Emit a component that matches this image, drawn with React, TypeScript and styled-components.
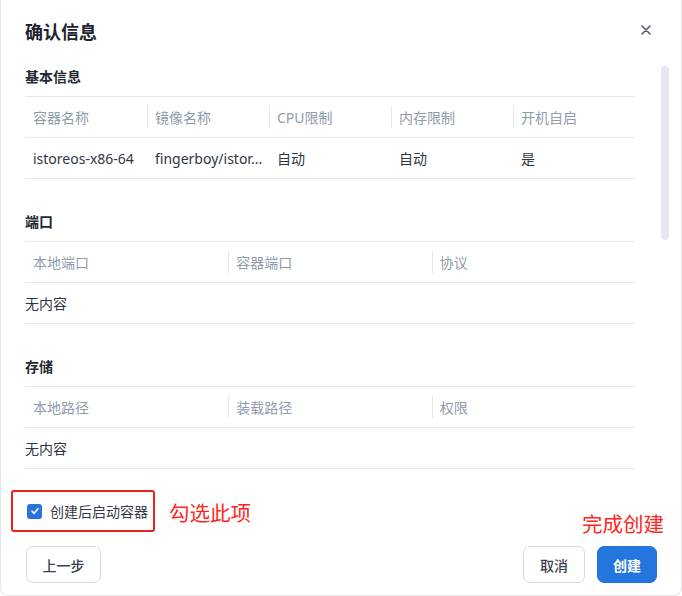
import React from "react";
import styled, { createGlobalStyle } from "styled-components";

const Global = createGlobalStyle`
  html, body { margin: 0; padding: 0; background: #ffffff; }
  body { font-family: "Noto Sans", "Noto Sans CJK SC", sans-serif; }
  * { box-sizing: border-box; }
`;

const Dialog = styled.div`
  position: relative;
  width: 682px;
  height: 596px;
  background: #fff;
  border-left: 1px solid #e1e4e8;
  border-right: 1px solid #e1e4e8;
  border-bottom: 1px solid #e1e4e8;
  border-radius: 0 0 8px 8px;
  display: flex;
  flex-direction: column;
  overflow: hidden;
`;

const Header = styled.div`
  height: 60px;
  flex: none;
  display: flex;
  align-items: center;
  justify-content: space-between;
  padding: 0 28px 0 24px;
`;

const Title = styled.div`
  font-family: "Noto Sans CJK SC", sans-serif;
  font-size: 18px;
  font-weight: 700;
  color: #1d2330;
  line-height: 24px;
  margin-top: 1px;
`;

const Close = styled.button`
  width: 14px;
  height: 14px;
  padding: 0;
  border: none;
  background: none;
  display: flex;
  align-items: center;
  justify-content: center;
  cursor: pointer;
`;

const Body = styled.div`
  height: 420px;
  flex: none;
  display: flex;
  overflow: hidden;
  padding-left: 24px;
`;

const Content = styled.div`
  width: 610px;
  flex: none;
  padding-top: 6px;
`;

const Scrollbar = styled.div`
  margin-left: 26px;
  margin-top: 6px;
  width: 8px;
  height: 174px;
  border-radius: 4px;
  background: #e5e8ec;
`;

const Section = styled.section`
  & + & { margin-top: 32px; }
`;

const SectionTitle = styled.div`
  font-family: "Noto Sans CJK SC", sans-serif;
  font-size: 14px;
  font-weight: 700;
  color: #222831;
  line-height: 20px;
  margin-bottom: 10px;
`;

const Table = styled.div<{ $cols: number }>`
  display: grid;
  grid-template-columns: repeat(${(p) => p.$cols}, 1fr);
  border-top: 1px solid #e3e7ed;
`;

const HeadCell = styled.div<{ $first?: boolean }>`
  height: 41px;
  display: flex;
  align-items: center;
  position: relative;
  padding-left: 8px;
  font-size: 14px;
  color: #909bab;
  border-bottom: 1px solid #e3e7ed;
  font-family: "Noto Sans", "Noto Sans CJK SC", sans-serif;
  &::before {
    content: "";
    display: ${(p) => (p.$first ? "none" : "block")};
    position: absolute;
    left: 0;
    top: 9px;
    height: 22px;
    width: 1px;
    background: #e3e7ed;
  }
`;

const Cell = styled.div`
  height: 41px;
  display: flex;
  align-items: center;
  padding-left: 8px;
  padding-right: 6px;
  font-size: 14px;
  color: #2f3642;
  border-bottom: 1px solid #e3e7ed;
  white-space: nowrap;
  overflow: hidden;
  & > span { overflow: hidden; text-overflow: ellipsis; }
`;

const Empty = styled.div<{ $cols: number }>`
  grid-column: 1 / span ${(p) => p.$cols};
  height: 41px;
  display: flex;
  align-items: center;
  font-size: 14px;
  color: #2f3642;
  border-bottom: 1px solid #e3e7ed;
`;

const CheckRow = styled.div`
  display: flex;
  align-items: center;
  gap: 14px;
  padding-left: 10px;
  margin-top: 10px;
  flex: none;
`;

const CheckLabel = styled.label`
  width: 144px;
  height: 42px;
  border: 2px solid #f0201c;
  border-radius: 3px;
  display: flex;
  align-items: center;
  gap: 8px;
  padding-left: 14px;
  font-size: 14px;
  color: #333a45;
  cursor: pointer;
`;

const Box = styled.span`
  width: 15px;
  height: 15px;
  border-radius: 3px;
  background: #2a73dd;
  display: flex;
  align-items: center;
  justify-content: center;
`;

const Note = styled.span`
  font-family: "Noto Sans CJK SC", sans-serif;
  font-size: 20.5px;
  color: #ff2621;
  line-height: 26px;
  margin-top: 2px;
`;

const FinishNote = styled(Note)`
  position: absolute;
  left: 581px;
  top: 510px;
  margin: 0;
`;

const Footer = styled.div`
  display: flex;
  align-items: center;
  padding: 0 24px 0 25px;
  margin-top: 14px;
  flex: none;
`;

const Spacer = styled.div`
  flex: 1;
`;

const Button = styled.button<{ $primary?: boolean; $w: number }>`
  width: ${(p) => p.$w}px;
  height: 37px;
  border-radius: 7px;
  border: 1px solid ${(p) => (p.$primary ? "#2575df" : "#d2dae4")};
  background: ${(p) => (p.$primary ? "#2575df" : "#fff")};
  color: ${(p) => (p.$primary ? "#fff" : "#3a4250")};
  font-family: "Noto Sans CJK SC", sans-serif;
  font-size: 14px;
  font-weight: ${(p) => (p.$primary ? 700 : 500)};
  cursor: pointer;
  padding: 0;
  & + & { margin-left: 12px; }
`;

const basic = {
  head: ["容器名称", "镜像名称", "CPU限制", "内存限制", "开机自启"],
  row: ["istoreos-x86-64", "fingerboy/istoreos-x86-64:latest", "自动", "自动", "是"],
};

function HeadRow({ cols }: { cols: string[] }) {
  return (
    <>
      {cols.map((c, i) => (
        <HeadCell key={c} $first={i === 0}>
          {c}
        </HeadCell>
      ))}
    </>
  );
}

export default function App() {
  return (
    <>
      <Global />
      <Dialog>
        <Header>
          <Title>确认信息</Title>
          <Close aria-label="close">
            <svg width="10" height="10" viewBox="0 0 10 10">
              <path d="M1 1 L9 9 M9 1 L1 9" stroke="#4a5262" strokeWidth="1.5" strokeLinecap="round" />
            </svg>
          </Close>
        </Header>
        <Body>
          <Content>
            <Section>
              <SectionTitle>基本信息</SectionTitle>
              <Table $cols={5}>
                <HeadRow cols={basic.head} />
                {basic.row.map((v, i) => (
                  <Cell key={i}>
                    <span>{i === 1 ? "fingerboy/istor..." : v}</span>
                  </Cell>
                ))}
              </Table>
            </Section>
            <Section>
              <SectionTitle>端口</SectionTitle>
              <Table $cols={3}>
                <HeadRow cols={["本地端口", "容器端口", "协议"]} />
                <Empty $cols={3}>无内容</Empty>
              </Table>
            </Section>
            <Section>
              <SectionTitle>存储</SectionTitle>
              <Table $cols={3}>
                <HeadRow cols={["本地路径", "装载路径", "权限"]} />
                <Empty $cols={3}>无内容</Empty>
              </Table>
            </Section>
          </Content>
          <Scrollbar />
        </Body>
        <CheckRow>
          <CheckLabel>
            <Box>
              <svg width="10" height="10" viewBox="0 0 10 10">
                <path d="M2 5.2 L4.2 7.3 L8 2.8" stroke="#fff" strokeWidth="1.6" fill="none" strokeLinecap="round" strokeLinejoin="round" />
              </svg>
            </Box>
            创建后启动容器
          </CheckLabel>
          <Note>勾选此项</Note>
        </CheckRow>
        <Footer>
          <Button $w={75}>上一步</Button>
          <Spacer />
          <Button $w={62}>取消</Button>
          <Button $w={60} $primary>
            创建
          </Button>
        </Footer>
        <FinishNote>完成创建</FinishNote>
      </Dialog>
    </>
  );
}
